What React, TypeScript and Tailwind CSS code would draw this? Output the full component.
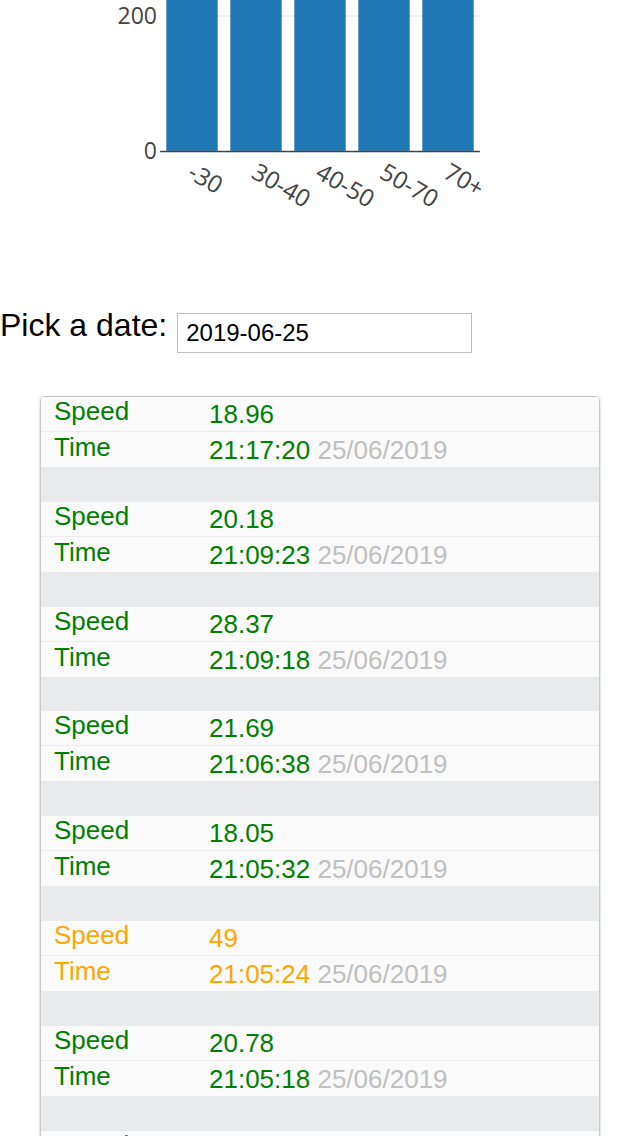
import React from 'react';

type Reading = { speed: string; time: string; date: string; alert?: boolean };

const readings: Reading[] = [
  { speed: '18.96', time: '21:17:20', date: '25/06/2019' },
  { speed: '20.18', time: '21:09:23', date: '25/06/2019' },
  { speed: '28.37', time: '21:09:18', date: '25/06/2019' },
  { speed: '21.69', time: '21:06:38', date: '25/06/2019' },
  { speed: '18.05', time: '21:05:32', date: '25/06/2019' },
  { speed: '49', time: '21:05:24', date: '25/06/2019', alert: true },
  { speed: '20.78', time: '21:05:18', date: '25/06/2019' },
  { speed: '19.42', time: '21:04:51', date: '25/06/2019' },
];

const buckets = ['-30', '30-40', '40-50', '50-70', '70+'];

// Histogram of speed buckets — plotly-ish look, y axis clipped at the top
function SpeedChart() {
  return (
    <svg width="640" height="230" className="block" style={{ fontFamily: '"Open Sans", sans-serif' }}>
      <line x1="165" y1="16" x2="480" y2="16" stroke="#eeeeee" strokeWidth="1.5" />
      {buckets.map((b, i) => {
        const x = 166.5 + i * 64;
        return (
          <rect key={b} x={x} y={-10} width={51} height={161} fill="#1f77b4" stroke="#5b9fd0" strokeWidth="0.8" />
        );
      })}
      <line x1="160" y1="151.5" x2="480" y2="151.5" stroke="#444" strokeWidth="1.6" />
      <text x="157" y="24" textAnchor="end" fontSize="23" fill="#444">200</text>
      <text x="157" y="159" textAnchor="end" fontSize="23" fill="#444">0</text>
      {buckets.map((b, i) => {
        const cx = 192 + i * 64 + 1;
        const cy = 165;
        return (
          <text
            key={b}
            x={cx}
            y={cy + 14}
            fontSize="24"
            fill="#444"
            transform={`rotate(30 ${cx} ${cy})`}
          >
            {b}
          </text>
        );
      })}
    </svg>
  );
}

function ReadingGroup({ r }: { r: Reading }) {
  const tone = r.alert ? 'text-[#ffa500]' : 'text-[#008000]';
  return (
    <>
      <div className="flex h-[35px] bg-[#fafafa] border-b border-[#ececec]">
        <div className={`w-[168px] pl-[13px] pt-[1px] leading-[26px] ${tone}`}>Speed</div>
        <div className={`pt-[4px] leading-[26px] ${tone}`}>{r.speed}</div>
      </div>
      <div className="flex h-[35px] bg-[#fafafa]">
        <div className={`w-[168px] pl-[13px] pt-[2px] leading-[26px] ${tone}`}>Time</div>
        <div className="pt-[5px] leading-[26px]">
          <span className={tone}>{r.time}</span>{' '}
          <span className="text-[#bfbfbf]">{r.date}</span>
        </div>
      </div>
      <div className="h-[34.8px] bg-[#e9eaec]" />
    </>
  );
}

export default function App() {
  return (
    <div className="w-[640px] h-[1136px] overflow-hidden bg-white" style={{ fontFamily: '"Liberation Sans", Arial, sans-serif' }}>
      <SpeedChart />

      <div className="flex items-start mt-[79px]">
        <span className="text-[32px] leading-[32px] text-black">Pick a date:</span>
        <input
          type="text"
          readOnly
          value="2019-06-25"
          className="ml-[10px] mt-[4px] h-[40px] w-[295px] border border-[#bdbdbd] px-[8px] text-[24px] text-black outline-none"
        />
      </div>

      <div className="mx-[40px] mt-[43px] rounded-[4px] border border-[#c8c8c8] shadow-[0_1px_3px_rgba(0,0,0,0.2)] overflow-hidden text-[26px]">
        {readings.map((r, i) => (
          <ReadingGroup key={i} r={r} />
        ))}
      </div>
    </div>
  );
}
